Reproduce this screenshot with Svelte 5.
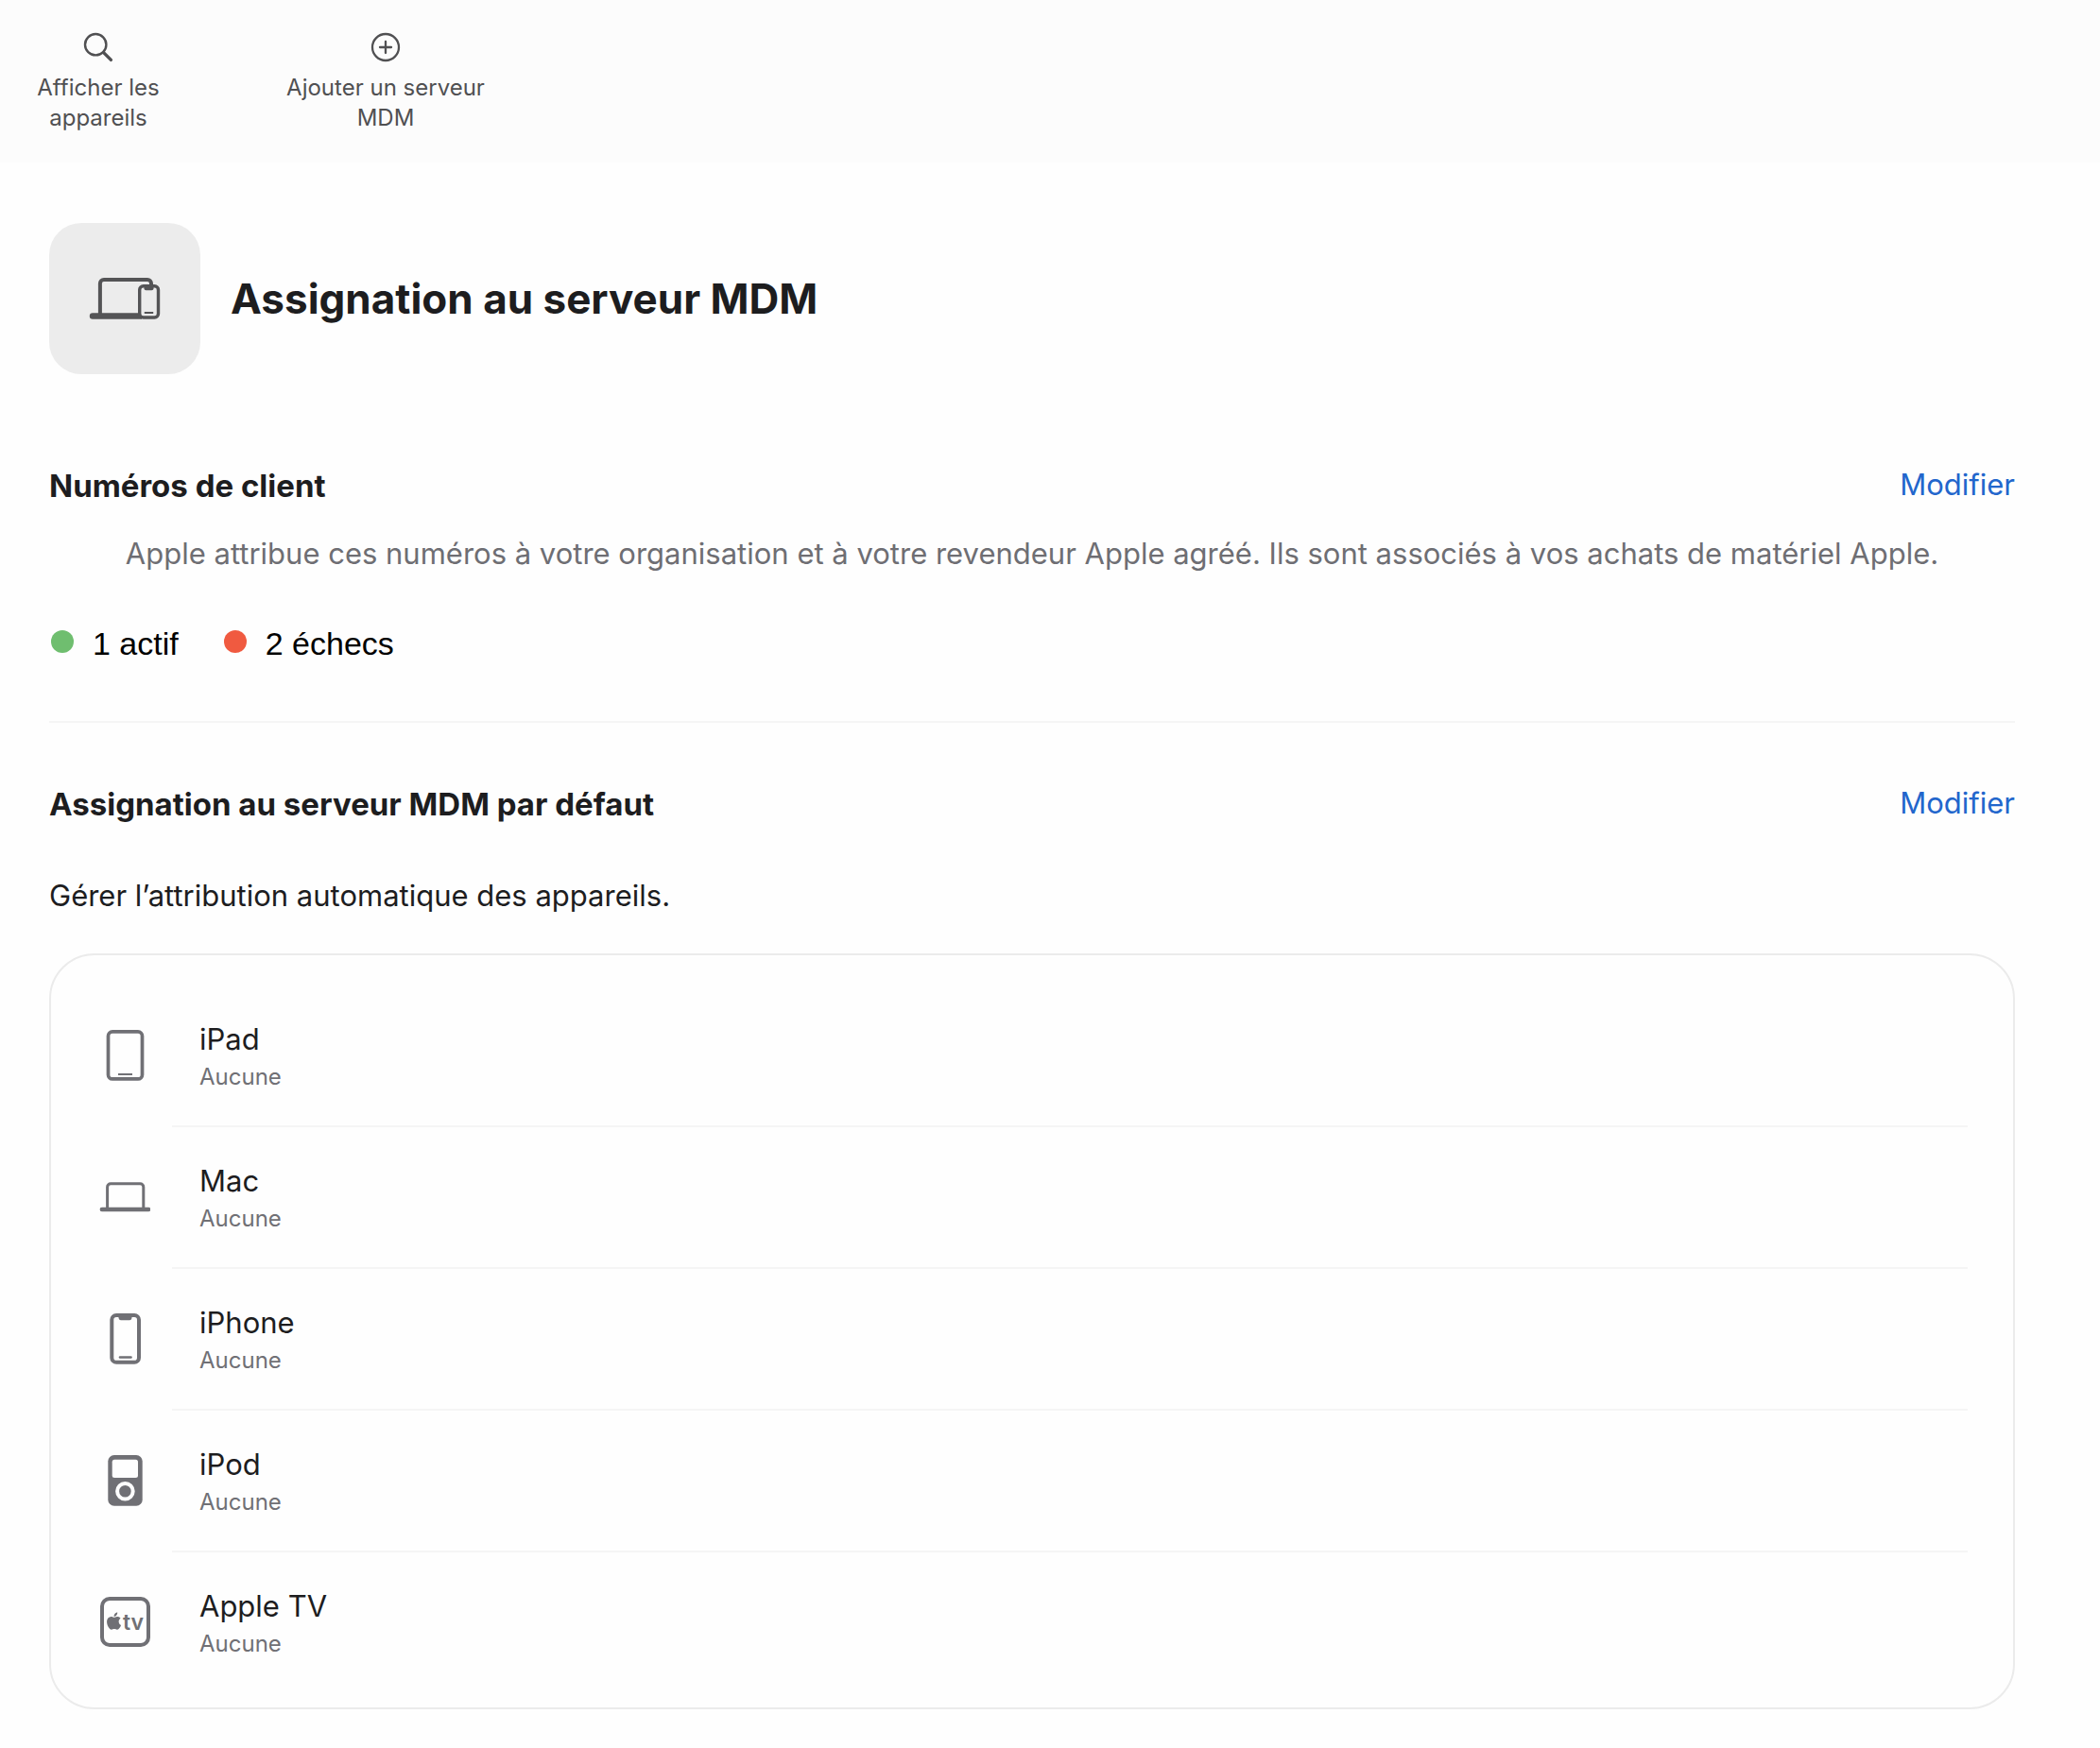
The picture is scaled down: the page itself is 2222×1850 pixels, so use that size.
<script lang="ts">
  const devices = [
    { id: 'ipad', name: 'iPad', server: 'Aucune' },
    { id: 'mac', name: 'Mac', server: 'Aucune' },
    { id: 'iphone', name: 'iPhone', server: 'Aucune' },
    { id: 'ipod', name: 'iPod', server: 'Aucune' },
    { id: 'appletv', name: 'Apple TV', server: 'Aucune' }
  ];

  const statuses = [
    { label: '1 actif', kind: 'ok' },
    { label: '2 échecs', kind: 'failed' }
  ];
</script>

<header class="toolbar">
  <button type="button" class="show-devices">
    <svg width="32" height="32" viewBox="0 0 32 32" fill="none" stroke="currentColor" aria-hidden="true">
      <circle cx="13.2" cy="13.2" r="11.2" stroke-width="2.4" />
      <path d="M21.6 21.6 29.4 29.4" stroke-width="3.4" stroke-linecap="round" />
    </svg>
    <span>Afficher les appareils</span>
  </button>
  <button type="button" class="add-server">
    <svg width="32" height="32" viewBox="0 0 32 32" fill="none" stroke="currentColor" stroke-width="2.3" aria-hidden="true">
      <circle cx="16" cy="16" r="14" />
      <path d="M16 10v12M10 16h12" stroke-linecap="round" />
    </svg>
    <span>Ajouter un serveur MDM</span>
  </button>
</header>

<main>
  <div class="hero">
    <div class="hero-icon">
      <svg width="160" height="160" viewBox="0 0 160 160" fill="none" stroke="currentColor" aria-hidden="true">
        <path d="M53.9 97V64a4 4 0 0 1 4-4H104a4 4 0 0 1 4 4v3" stroke-width="4" />
        <path d="M46 95.3H98v6.4H46a3.2 3.2 0 0 1 0-6.4z" fill="currentColor" stroke="none" />
        <rect x="95.7" y="66.7" width="19.8" height="33.3" rx="4" fill="#ececec" stroke-width="3.4" />
        <path d="M100.5 67h10v2.2a2 2 0 0 1-2 2h-6a2 2 0 0 1-2-2z" fill="currentColor" stroke="none" />
        <path d="M100.8 95h9.4" stroke-width="2" />
      </svg>
    </div>
    <h1>Assignation au serveur MDM</h1>
  </div>

  <section class="customers">
    <div class="section-head">
      <h2>Numéros de client</h2>
      <button type="button" class="edit">Modifier</button>
    </div>
    <p class="hint">Apple attribue ces numéros à votre organisation et à votre revendeur Apple agréé. Ils sont associés à vos achats de matériel Apple.</p>
    <div class="statuses">
      {#each statuses as status}
        <div class="status"><span class="dot {status.kind}"></span>{status.label}</div>
      {/each}
    </div>
  </section>

  <section class="defaults">
    <div class="section-head">
      <h2>Assignation au serveur MDM par défaut</h2>
      <button type="button" class="edit">Modifier</button>
    </div>
    <p class="intro">Gérer l’attribution automatique des appareils.</p>

    <ul class="devices">
      {#each devices as device}
        <li>
          <svg width="54" height="54" viewBox="0 0 54 54" fill="none" stroke="currentColor" aria-hidden="true">
            {#if device.id === 'ipad'}
              <rect x="9.5" y="1.9" width="36" height="50" rx="4.5" stroke-width="3.7" />
              <path d="M20 47h15" stroke-width="2" />
            {:else if device.id === 'mac'}
              <path d="M8.6 39V16.3a3.5 3.5 0 0 1 3.5-3.5h31.2a3.5 3.5 0 0 1 3.5 3.5V39" stroke-width="3" />
              <path d="M2.8 40h49.4" stroke-width="4.4" stroke-linecap="round" />
            {:else if device.id === 'iphone'}
              <rect x="13.3" y="2" width="28.7" height="49.7" rx="4.8" stroke-width="4" />
              <path d="M19.5 3.5h16c-1 .4-1 1-1.2 2a2.2 2.2 0 0 1-2.1 1.8h-9.4a2.2 2.2 0 0 1-2.1-1.8c-.2-1-.2-1.6-1.2-2z" fill="currentColor" stroke="none" />
              <path d="M22 46.5h11.5" stroke-width="2.6" stroke-linecap="round" />
            {:else if device.id === 'ipod'}
              <rect x="9.3" y="0" width="36.4" height="53.7" rx="6.5" fill="currentColor" stroke="none" />
              <rect x="13.7" y="4.7" width="27.3" height="19.3" rx="2.5" fill="#fefefe" stroke="none" />
              <circle cx="27.4" cy="38.3" r="8.3" stroke="#fefefe" stroke-width="4" />
            {:else}
              <rect x="3" y="2" width="49" height="49" rx="8" stroke-width="4" />
              <path
                transform="translate(6.4 16.5) scale(.765)"
                fill="currentColor"
                stroke="none"
                d="M12.152 6.896c-.948 0-2.415-1.078-3.96-1.04-2.04.027-3.91 1.183-4.961 3.014-2.117 3.675-.546 9.103 1.519 12.09 1.013 1.454 2.208 3.09 3.792 3.039 1.52-.065 2.09-.987 3.935-.987 1.831 0 2.35.987 3.96.948 1.637-.026 2.676-1.48 3.676-2.948 1.156-1.688 1.636-3.325 1.662-3.415-.039-.013-3.182-1.221-3.22-4.857-.026-3.04 2.48-4.494 2.597-4.559-1.429-2.09-3.623-2.324-4.39-2.376-2-.156-3.675 1.09-4.61 1.09zM15.53 3.83c.843-1.012 1.4-2.427 1.245-3.83-1.207.052-2.662.805-3.532 1.818-.78.896-1.454 2.338-1.273 3.714 1.338.104 2.715-.688 3.559-1.701"
              />
              <text x="25" y="35" class="tv">tv</text>
            {/if}
          </svg>
          <div class="device">
            <span class="device-name">{device.name}</span>
            <span class="device-server">{device.server}</span>
          </div>
        </li>
      {/each}
    </ul>
  </section>
</main>

<style>
  :global(body) {
    margin: 0;
    background: #fefefe;
    color: #1d1d1f;
    font-family: Inter, sans-serif;
  }

  button {
    margin: 0;
    padding: 0;
    border: none;
    background: none;
    font-family: inherit;
    cursor: pointer;
  }

  h1, h2, p, ul {
    margin: 0;
    padding: 0;
  }

  .toolbar {
    display: flex;
    align-items: flex-start;
    gap: 112px;
    padding: 34px 24px 31px;
    background: #fcfcfc;
  }

  .toolbar button {
    display: flex;
    flex-direction: column;
    align-items: center;
    gap: 11px;
    color: #505052;
    font-size: 24px;
    line-height: 32px;
    text-align: center;
  }

  .toolbar .show-devices {
    width: 160px;
  }

  .toolbar .add-server {
    width: 224px;
  }

  main {
    padding: 64px 90px 40px 52px;
  }

  .hero {
    display: flex;
    align-items: center;
    gap: 32px;
    margin-bottom: 98px;
  }

  .hero-icon {
    width: 160px;
    height: 160px;
    border-radius: 34px;
    background: #ececec;
    color: #545456;
  }

  h1 {
    font-size: 44px;
    line-height: 56px;
    font-weight: 700;
  }

  .section-head {
    display: flex;
    justify-content: space-between;
    align-items: flex-start;
  }

  h2 {
    font-size: 33px;
    line-height: 40px;
    font-weight: 700;
  }

  .edit {
    color: #2266cc;
    font-size: 31px;
    line-height: 38px;
  }

  .hint, .intro {
    font-size: 31px;
    line-height: 40px;
  }

  .hint {
    margin-top: 32px;
    color: #6e6e73;
    text-align: center;
  }

  .customers {
    padding-bottom: 62px;
    border-bottom: 2px solid #f5f5f5;
  }

  .statuses {
    display: flex;
    gap: 46px;
    margin-top: 55px;
    color: #000;
    font-family: "Liberation Sans", sans-serif;
    font-size: 34px;
    line-height: 40px;
  }

  .status {
    display: flex;
    align-items: center;
    gap: 20px;
    padding-left: 2px;
  }

  .dot {
    width: 24px;
    height: 24px;
    margin-bottom: 4px;
    border-radius: 50%;
  }

  .dot.ok {
    background: #6fbe6f;
  }

  .dot.failed {
    background: #f05a40;
  }

  .defaults {
    padding-top: 66px;
  }

  .intro {
    margin-top: 57px;
  }

  .devices {
    margin-top: 41px;
    padding: 32px 48px 14px 51px;
    border: 2px solid #ebebeb;
    border-radius: 48px;
    list-style: none;
  }

  .devices li {
    display: flex;
    align-items: center;
    gap: 23px;
    color: #707075;
  }

  .devices svg {
    margin-bottom: 2px;
  }

  .device {
    flex: 1;
    display: flex;
    flex-direction: column;
    gap: 4px;
    padding: 37px 29px 35px;
    border-bottom: 2px solid #f5f5f5;
  }

  .devices li:last-child .device {
    border-bottom-color: transparent;
  }

  .device-name {
    color: #1d1d1f;
    font-size: 31px;
    line-height: 40px;
  }

  .device-server {
    font-size: 24px;
    line-height: 32px;
  }

  .tv {
    fill: currentColor;
    stroke: none;
    font-size: 23px;
    font-weight: 600;
  }
</style>
